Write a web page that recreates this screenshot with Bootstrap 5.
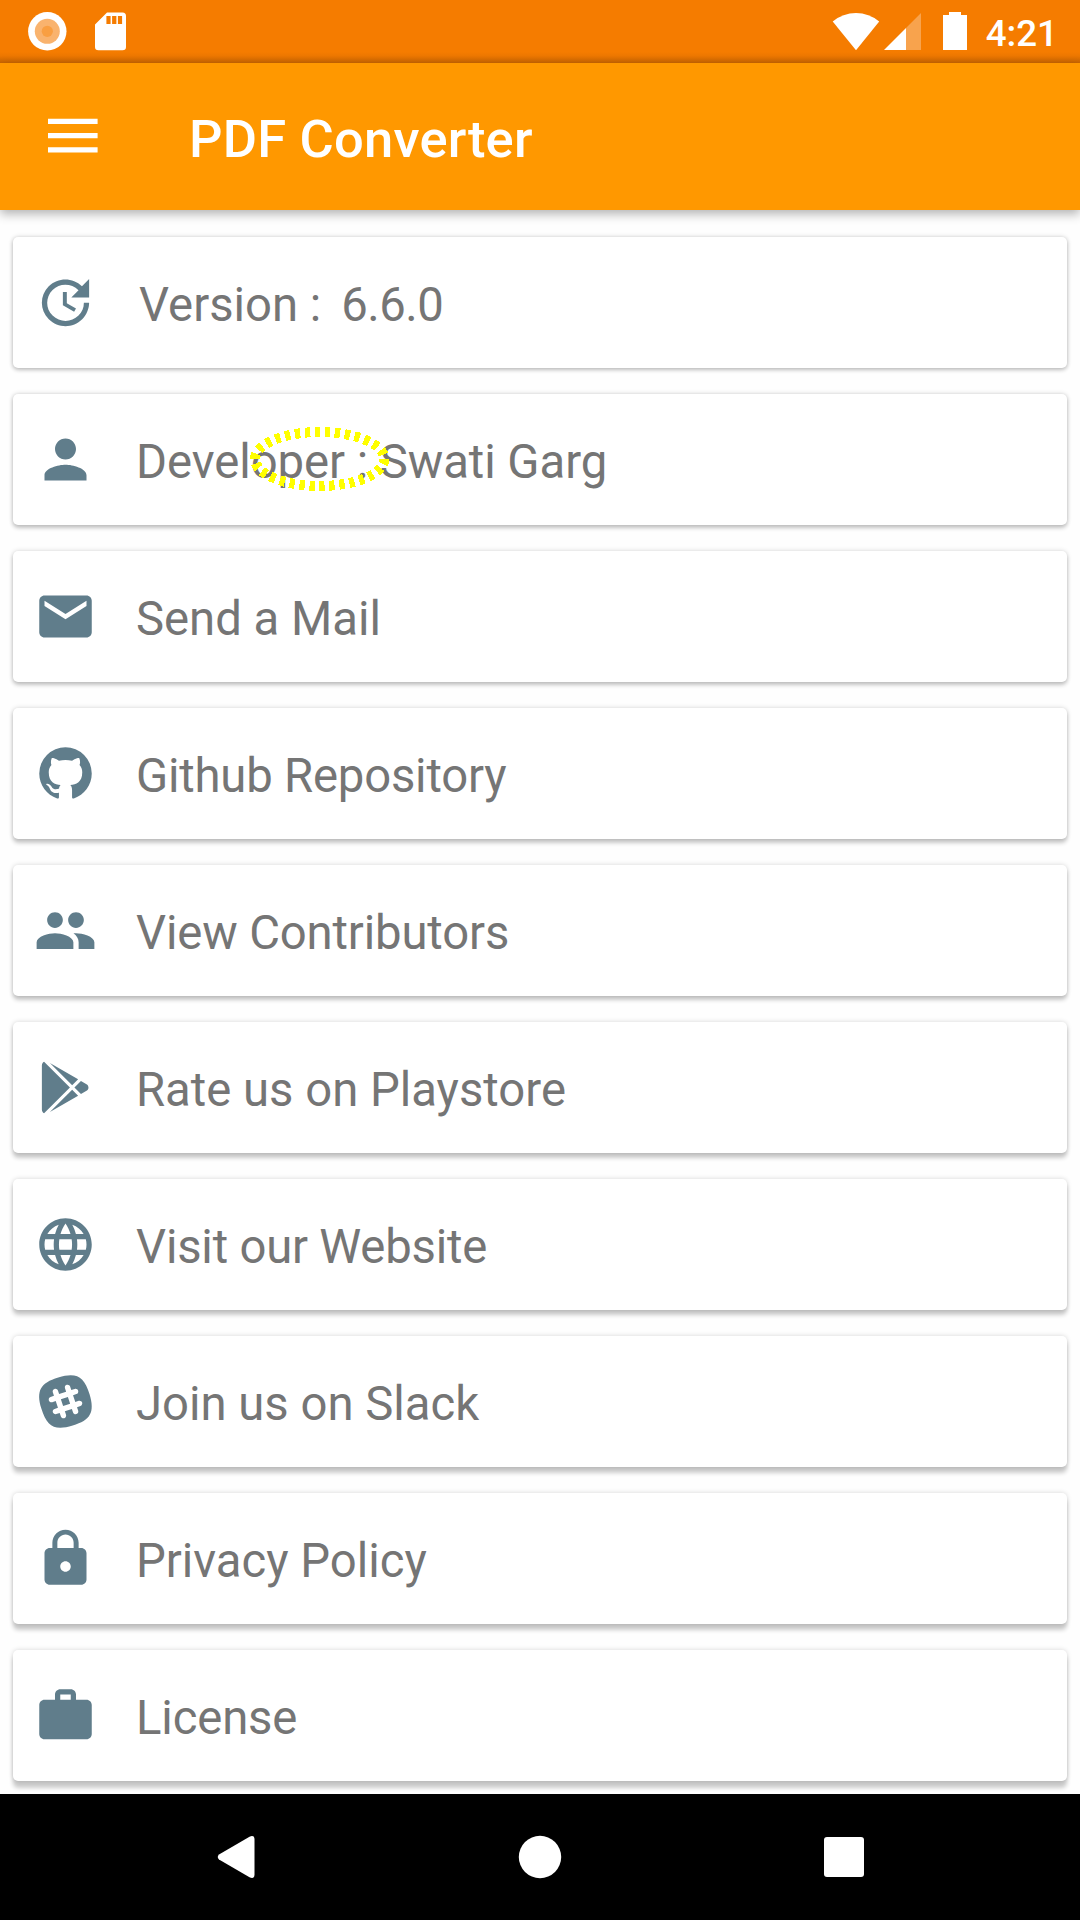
<!DOCTYPE html>
<html lang="en">
<head>
<meta charset="utf-8">
<meta name="viewport" content="width=device-width, initial-scale=1">
<title>PDF Converter</title>
<link href="https://cdn.jsdelivr.net/npm/bootstrap@5.3.0/dist/css/bootstrap.min.css" rel="stylesheet">
<style>
  body { font-family: Roboto, "Liberation Sans", sans-serif; background: #fefefe; height: 1920px; overflow: hidden; }
  svg { display: block; flex: none; }
  .status-strip { height: 63px; background: linear-gradient(#f57c00 0 52px, #ec7700 56px, #c96500 63px); padding: 0 22px 0 27px; color: #fff; }
  .clock { font-size: 36.75px; font-weight: 500; line-height: 61px; padding-top: 3px; height: 63px; }
  .app-bar { height: 147px; background: #ff9800; padding: 0 48px; box-shadow: 0 4px 10px rgba(0,0,0,.3); z-index: 1; }
  .menu-icon { margin-bottom: 2px; }
  .app-title { font-size: 52.5px; font-weight: 500; line-height: 62px; margin-left: 91px; padding-top: 4px; color: #fff; letter-spacing: .22px; }
  .about-list { padding: 27px 13px 13px; gap: 26px; height: 1584px; }
  .about-item { height: 131px; border: 0; border-radius: 5px; background: #fff; padding: 0 21px; --drop: 2px;
    box-shadow: 0 var(--drop) 4px rgba(0,0,0,.2), 0 0 5px rgba(0,0,0,.16); }
  .about-item:nth-child(2) { --drop: 2.5px; }
  .about-item:nth-child(3) { --drop: 3px; }
  .about-item:nth-child(4) { --drop: 3.5px; }
  .about-item:nth-child(5) { --drop: 4px; }
  .about-item:nth-child(6) { --drop: 4.5px; }
  .about-item:nth-child(7) { --drop: 5px; }
  .about-item:nth-child(8) { --drop: 5.5px; }
  .about-item:nth-child(9) { --drop: 6px; }
  .about-item:nth-child(10) { --drop: 6.5px; }
  .about-icon { width: 63px; height: 63px; fill: #607d8b; }
  .about-label { font-size: 47.25px; line-height: 56px; color: #757575; margin-left: 39px; padding-top: 5px; white-space: pre; }
  .about-label.version { margin-left: 42px; }
  .version-number { letter-spacing: -.5px; margin-left: -3.5px; }
  .tight { letter-spacing: -.2px; }
  .snug { letter-spacing: -.14px; }
  .close { letter-spacing: -.05px; }
  .highlight { position: absolute; left: 235px; top: 31px; }
  .nav-strip { height: 126px; background: #000; padding: 0 216px; }
</style>
</head>
<body class="d-flex flex-column m-0">
<header class="status-strip d-flex align-items-center justify-content-between flex-shrink-0">
  <svg width="100" height="63" viewBox="27 0 100 63">
    <circle cx="47.3" cy="31.3" r="19.2" fill="#fff"/><circle cx="47.3" cy="31.3" r="12.5" fill="#f9b36e"/><circle cx="47.3" cy="31.3" r="5.6" fill="#f99f42"/>
    <path fill="#fff" fill-rule="evenodd" d="M107 12.5H122.5Q126 12.5 126 16V47Q126 50.3 122.5 50.3H98.5Q95 50.3 95 47V24.5ZM106.4 16V24H110.6V16ZM112.1 16V24H116.4V16ZM117.9 16V24H122.1V16Z"/>
  </svg>
  <div class="d-flex">
    <svg width="154" height="63" viewBox="832 0 154 63">
      <path fill="#fff" d="M832.7 21.5Q843 13 856 13T879.2 21.5L856 50.3Z"/>
      <path fill="#fff" fill-opacity=".3" d="M906 28V50H921V13Z"/>
      <path fill="#fff" d="M884 50H906V28ZM943 15H949V12H961V15H967V50H943Z"/>
    </svg>
    <span class="clock">4:21</span>
  </div>
</header>
<nav class="app-bar d-flex align-items-center flex-shrink-0 position-relative">
  <svg class="menu-icon" width="50" height="36" viewBox="0 0 50 36" fill="#fff"><path d="M0 .7H49.6V6H0ZM0 15H49.6V20.3H0ZM0 29.2H49.6V34.5H0Z"/></svg>
  <h1 class="app-title mb-0">PDF Converter</h1>
</nav>
<main class="about-list d-flex flex-column flex-shrink-0">
  <div class="about-item card flex-row align-items-center">
    <svg class="about-icon" viewBox="0 0 24 24"><path d="M21 10.12h-6.78l2.74-2.82c-2.73-2.7-7.15-2.8-9.88-.1-2.73 2.71-2.73 7.08 0 9.79s7.15 2.71 9.88 0C18.32 15.65 19 14.08 19 12.1h2c0 1.98-.88 4.55-2.64 6.29-3.51 3.48-9.21 3.48-12.72 0-3.5-3.47-3.53-9.11-.02-12.58s9.14-3.47 12.65 0L21 3v7.12zM12.5 8v4.25l3.5 2.08-.72 1.21L11 13V8h1.5z"/></svg>
    <span class="about-label version">Version :  <span class="version-number">6.6.0</span></span>
  </div>
  <div class="about-item card flex-row align-items-center">
    <svg class="about-icon" viewBox="0 0 24 24"><path d="M12 12c2.21 0 4-1.79 4-4s-1.79-4-4-4-4 1.79-4 4 1.79 4 4 4zm0 2c-2.67 0-8 1.34-8 4v2h16v-2c0-2.66-5.33-4-8-4z"/></svg>
    <span class="about-label close">Developer : Swati Garg</span>
    <svg class="highlight" width="144" height="68" viewBox="0 0 144 68"><ellipse cx="71.7" cy="34" rx="64.7" ry="27" fill="none" stroke="#ff0" stroke-width="10" stroke-dasharray="5.3 4.7" shape-rendering="crispEdges"/></svg>
  </div>
  <div class="about-item card flex-row align-items-center">
    <svg class="about-icon" viewBox="0 0 24 24"><path d="M20 4H4c-1.1 0-1.99.9-1.99 2L2 18c0 1.1.9 2 2 2h16c1.1 0 2-.9 2-2V6c0-1.1-.9-2-2-2zm0 4l-8 5-8-5V6l8 5 8-5v2z"/></svg>
    <span class="about-label">Send a Mail</span>
  </div>
  <div class="about-item card flex-row align-items-center">
    <svg class="about-icon" viewBox="0 0 24 24"><path d="M12,2A10,10 0 0,0 2,12C2,16.42 4.87,20.17 8.84,21.5C9.34,21.58 9.5,21.27 9.5,21C9.5,20.77 9.5,20.14 9.5,19.31C6.73,19.91 6.14,17.97 6.14,17.97C5.68,16.81 5.03,16.5 5.03,16.5C4.12,15.88 5.1,15.9 5.1,15.9C6.1,15.97 6.63,16.93 6.63,16.93C7.5,18.45 8.97,18 9.54,17.76C9.63,17.11 9.89,16.67 10.17,16.42C7.95,16.17 5.62,15.31 5.62,11.5C5.62,10.39 6,9.5 6.65,8.79C6.55,8.54 6.2,7.5 6.75,6.15C6.75,6.15 7.59,5.88 9.5,7.17C10.29,6.95 11.15,6.84 12,6.84C12.85,6.84 13.71,6.95 14.5,7.17C16.41,5.88 17.25,6.15 17.25,6.15C17.8,7.5 17.45,8.54 17.35,8.79C18,9.5 18.38,10.39 18.38,11.5C18.38,15.32 16.04,16.16 13.81,16.41C14.17,16.72 14.5,17.33 14.5,18.26C14.5,19.6 14.5,20.68 14.5,21C14.5,21.27 14.66,21.59 15.17,21.5C19.14,20.16 22,16.42 22,12A10,10 0 0,0 12,2Z"/></svg>
    <span class="about-label tight">Github Repository</span>
  </div>
  <div class="about-item card flex-row align-items-center">
    <svg class="about-icon" viewBox="0 0 24 24"><path d="M16 11c1.66 0 2.99-1.34 2.99-3S17.66 5 16 5c-1.66 0-3 1.34-3 3s1.34 3 3 3zm-8 0c1.66 0 2.99-1.34 2.99-3S9.66 5 8 5C6.34 5 5 6.34 5 8s1.34 3 3 3zm0 2c-2.33 0-7 1.17-7 3.5V19h14v-2.5c0-2.33-4.67-3.5-7-3.5zm8 0c-.29 0-.62.02-.97.05 1.16.84 1.97 1.97 1.97 3.45V19h6v-2.5c0-2.33-4.67-3.5-7-3.5z"/></svg>
    <span class="about-label snug">View Contributors</span>
  </div>
  <div class="about-item card flex-row align-items-center">
    <svg class="about-icon" viewBox="0 0 24 24"><path d="M3,20.5V3.5C3,2.91 3.34,2.39 3.84,2.15L13.69,12L3.84,21.85C3.34,21.6 3,21.09 3,20.5M16.81,15.12L6.05,21.34L14.54,12.85L16.81,15.12M20.16,10.81C20.5,11.08 20.75,11.5 20.75,12C20.75,12.5 20.53,12.9 20.18,13.18L17.89,14.5L15.39,12L17.89,9.5L20.16,10.81M6.05,2.66L16.81,8.88L14.54,11.15L6.05,2.66Z"/></svg>
    <span class="about-label">Rate us on Playstore</span>
  </div>
  <div class="about-item card flex-row align-items-center">
    <svg class="about-icon" viewBox="0 0 24 24"><path d="M11.99 2C6.47 2 2 6.48 2 12s4.47 10 9.99 10C17.52 22 22 17.52 22 12S17.52 2 11.99 2zm6.93 6h-2.95c-.32-1.25-.78-2.45-1.38-3.56 1.84.63 3.37 1.91 4.33 3.56zM12 4.04c.83 1.2 1.48 2.53 1.91 3.96h-3.82c.43-1.43 1.08-2.76 1.91-3.96zM4.26 14C4.1 13.36 4 12.69 4 12s.1-1.36.26-2h3.38c-.08.66-.14 1.32-.14 2 0 .68.06 1.34.14 2H4.26zm.82 2h2.95c.32 1.25.78 2.45 1.38 3.56-1.84-.63-3.37-1.9-4.33-3.56zm2.95-8H5.08c.96-1.66 2.49-2.93 4.33-3.56C8.81 5.55 8.35 6.75 8.03 8zM12 19.96c-.83-1.2-1.48-2.53-1.91-3.96h3.82c-.43 1.43-1.08 2.76-1.91 3.96zM14.34 14H9.66c-.09-.66-.16-1.32-.16-2 0-.68.07-1.35.16-2h4.68c.09.65.16 1.32.16 2 0 .68-.07 1.34-.16 2zm.25 5.56c.6-1.11 1.06-2.31 1.38-3.56h2.95c-.96 1.65-2.49 2.93-4.33 3.56zM16.36 14c.08-.66.14-1.32.14-2 0-.68-.06-1.34-.14-2h3.38c.16.64.26 1.31.26 2s-.1 1.36-.26 2h-3.38z"/></svg>
    <span class="about-label tight">Visit our Website</span>
  </div>
  <div class="about-item card flex-row align-items-center">
    <svg class="about-icon" viewBox="0 0 24 24"><path fill-rule="evenodd" d="M10.23,11.16L12.91,10.27L13.77,12.84L11.09,13.73L10.23,11.16M17.69,13.71C18.23,13.53 18.5,12.94 18.34,12.4C18.16,11.86 17.57,11.56 17.03,11.75L15.73,12.18L14.87,9.61L16.17,9.17C16.71,9 17,8.4 16.82,7.86C16.64,7.32 16.05,7 15.5,7.21L14.21,7.64L13.76,6.3C13.58,5.76 13,5.46 12.45,5.65C11.91,5.83 11.62,6.42 11.8,6.96L12.25,8.3L9.57,9.19L9.12,7.85C8.94,7.31 8.36,7 7.81,7.2C7.27,7.38 7,7.97 7.16,8.5L7.61,9.85L6.31,10.29C5.77,10.47 5.5,11.06 5.66,11.6C5.8,12 6.19,12.3 6.61,12.31L6.97,12.25L8.27,11.82L9.13,14.39L7.83,14.83C7.29,15 7,15.6 7.18,16.14C7.32,16.56 7.71,16.84 8.13,16.85L8.5,16.79L9.79,16.36L10.24,17.7C10.38,18.13 10.77,18.4 11.19,18.41L11.55,18.35C12.09,18.17 12.38,17.59 12.2,17.04L11.75,15.7L14.43,14.81L14.88,16.15C15,16.57 15.41,16.84 15.83,16.85L16.19,16.8C16.73,16.62 17,16.03 16.84,15.5L16.39,14.15L17.69,13.71M21.17,9.25C23.23,16.12 21.62,19.1 14.75,21.17C7.88,23.23 4.9,21.62 2.83,14.75C0.77,7.88 2.38,4.9 9.25,2.83C16.12,0.77 19.1,2.38 21.17,9.25Z"/></svg>
    <span class="about-label">Join us on Slack</span>
  </div>
  <div class="about-item card flex-row align-items-center">
    <svg class="about-icon" viewBox="0 0 24 24"><path d="M18 8h-1V6c0-2.76-2.24-5-5-5S7 3.24 7 6v2H6c-1.1 0-2 .9-2 2v10c0 1.1.9 2 2 2h12c1.1 0 2-.9 2-2V10c0-1.1-.9-2-2-2zm-6 9c-1.1 0-2-.9-2-2s.9-2 2-2 2 .9 2 2-.9 2-2 2zm3.1-9H8.9V6c0-1.71 1.39-3.1 3.1-3.1 1.71 0 3.1 1.39 3.1 3.1v2z"/></svg>
    <span class="about-label">Privacy Policy</span>
  </div>
  <div class="about-item card flex-row align-items-center">
    <svg class="about-icon" viewBox="0 0 24 24"><path d="M20 6h-4V4c0-1.11-.89-2-2-2h-4c-1.11 0-2 .89-2 2v2H4c-1.11 0-1.99.89-1.99 2L2 19c0 1.11.89 2 2 2h16c1.11 0 2-.89 2-2V8c0-1.11-.89-2-2-2zm-6 0h-4V4h4v2z"/></svg>
    <span class="about-label snug">License</span>
  </div>
</main>
<footer class="nav-strip d-flex align-items-center justify-content-between flex-shrink-0">
  <svg width="40" height="44" viewBox="0 0 40 44"><path fill="#fff" d="M3 19.5 33.5 1.7Q38.5 -.3 38.5 4.5V39.5Q38.5 44.3 33.5 42.3L3 24.5Q.5 22 3 19.5Z"/></svg>
  <svg width="44" height="44" viewBox="0 0 44 44"><circle cx="22" cy="22" r="21.2" fill="#fff"/></svg>
  <svg width="40" height="40" viewBox="0 0 40 40"><rect width="40" height="40" rx="3" fill="#fff"/></svg>
</footer>
<script src="https://cdn.jsdelivr.net/npm/bootstrap@5.3.0/dist/js/bootstrap.bundle.min.js"></script>
</body>
</html>
